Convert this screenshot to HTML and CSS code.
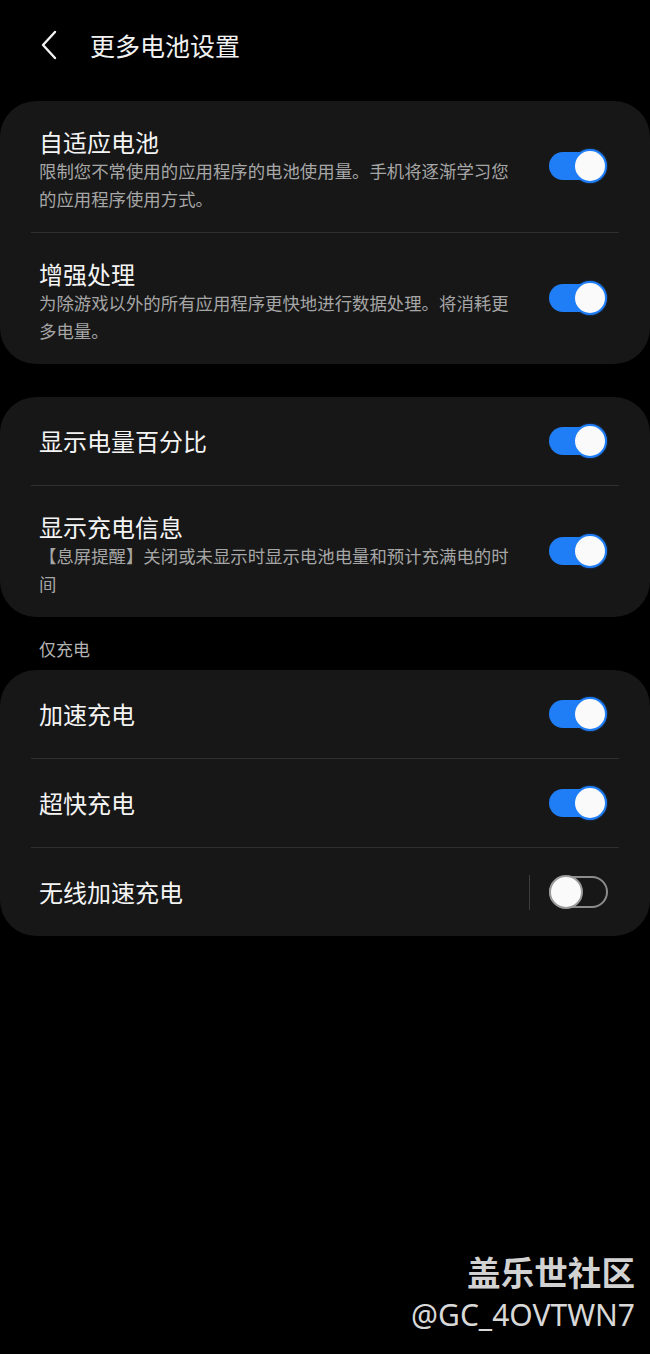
FILE: index.html
```html
<!DOCTYPE html>
<html lang="zh-CN">
<head>
    <meta charset="UTF-8">
    <title>更多电池设置</title>
    <link rel="stylesheet" href="styles.css">
</head>
<body>
<div class="screen">
    <div class="app-bar">
        <svg class="back" width="16" height="30" viewBox="0 0 16 30">
            <polyline points="14,2 2,15 14,28" fill="none" stroke="#f2f2f2" stroke-width="2.4" stroke-linecap="round" stroke-linejoin="round"/>
        </svg>
        <div class="app-title">更多电池设置</div>
    </div>

    <div class="card">
        <div class="row two">
            <div class="text">
                <div class="title">自适应电池</div>
                <div class="sub">限制您不常使用的应用程序的电池使用量。手机将逐渐学习您的应用程序使用方式。</div>
            </div>
            <div class="switch on"><span class="track"></span><span class="thumb"></span></div>
        </div>
        <div class="row two">
            <div class="text">
                <div class="title">增强处理</div>
                <div class="sub">为除游戏以外的所有应用程序更快地进行数据处理。将消耗更多电量。</div>
            </div>
            <div class="switch on"><span class="track"></span><span class="thumb"></span></div>
        </div>
    </div>

    <div class="card">
        <div class="row">
            <div class="text">
                <div class="title">显示电量百分比</div>
            </div>
            <div class="switch on"><span class="track"></span><span class="thumb"></span></div>
        </div>
        <div class="row two">
            <div class="text">
                <div class="title">显示充电信息</div>
                <div class="sub">【息屏提醒】关闭或未显示时显示电池电量和预计充满电的时间</div>
            </div>
            <div class="switch on"><span class="track"></span><span class="thumb"></span></div>
        </div>
    </div>

    <div class="section-label">仅充电</div>

    <div class="card">
        <div class="row">
            <div class="text">
                <div class="title">加速充电</div>
            </div>
            <div class="switch on"><span class="track"></span><span class="thumb"></span></div>
        </div>
        <div class="row">
            <div class="text">
                <div class="title">超快充电</div>
            </div>
            <div class="switch on"><span class="track"></span><span class="thumb"></span></div>
        </div>
        <div class="row">
            <div class="text">
                <div class="title">无线加速充电</div>
            </div>
            <span class="vbar"></span>
            <div class="switch"><span class="track"></span><span class="thumb"></span></div>
        </div>
    </div>

    <div class="watermark">
        <div class="wm-name">盖乐世社区</div>
        <div class="wm-id">@GC_4OVTWN7</div>
    </div>
</div>
</body>
</html>
```

FILE: styles.css
```css
* {
    box-sizing: border-box;
}
body {
    margin: 0;
    background: #000;
    font-family: "Noto Sans CJK SC", "Noto Sans", sans-serif;
    color: #f2f2f2;
}
.screen {
    position: relative;
    width: 650px;
    height: 1354px;
    overflow: hidden;
}
.app-bar {
    display: flex;
    align-items: center;
    height: 90px;
    padding-left: 41px;
}
.back {
    display: block;
}
.app-title {
    margin-left: 33px;
    font-size: 25px;
    line-height: 30px;
    color: #f2f2f2;
}
.card {
    margin-top: 11px;
    background: #171717;
    border-radius: 36px;
    padding: 0 31px;
}
.card + .card {
    margin-top: 33px;
}
.row {
    display: flex;
    align-items: center;
    height: 88px;
    padding: 0 12px 0 8px;
    border-top: 1px solid #2f2f2f;
}
.row:first-child {
    border-top: none;
}
.row + .row {
    height: 89px;
}
.row.two,
.row + .row.two {
    height: auto;
    padding-top: 26px;
    padding-bottom: 19px;
}
.row.two .switch {
    margin-bottom: 8px;
}
.text {
    flex: 1;
    padding-right: 30px;
}
.title {
    font-size: 24px;
    line-height: 30px;
    color: #f4f4f4;
}
.sub {
    font-size: 17.4px;
    line-height: 28px;
    color: #a6a6a6;
}
.section-label {
    padding: 18px 0 7px 39px;
    font-size: 17px;
    line-height: 28px;
    color: #b4b4b4;
}
.section-label + .card {
    margin-top: 0;
}
.vbar {
    width: 1px;
    height: 35px;
    background: #3d3d3d;
    margin-right: 19px;
}
.switch {
    position: relative;
    width: 58px;
    height: 34px;
    flex-shrink: 0;
}
.switch .track {
    position: absolute;
    left: 0;
    top: 3px;
    width: 54px;
    height: 28px;
    border-radius: 14px;
    background: #1f7ef6;
}
.switch .thumb {
    position: absolute;
    right: 0;
    top: 0;
    width: 34px;
    height: 34px;
    border-radius: 50%;
    background: #fafafa;
    border: 2px solid #1f7ef6;
    box-shadow: 0 0 2px rgba(31, 126, 246, 0.6);
}
.switch:not(.on) .track {
    top: 1px;
    width: 59px;
    height: 32px;
    border-radius: 16px;
    background: transparent;
    border: 2px solid #8c8c8c;
}
.switch:not(.on) .thumb {
    right: auto;
    left: 0;
    border-color: #9a9a9a;
    box-shadow: none;
}
.watermark {
    position: absolute;
    right: 15px;
    top: 1250px;
    text-align: right;
    color: #d2d2d2;
}
.wm-name {
    font-size: 33.6px;
    font-weight: 700;
    line-height: 44px;
}
.wm-id {
    font-family: "Noto Sans", "Open Sans", sans-serif;
    font-size: 30px;
    line-height: 42px;
    color: #d8d8d8;
}
```
